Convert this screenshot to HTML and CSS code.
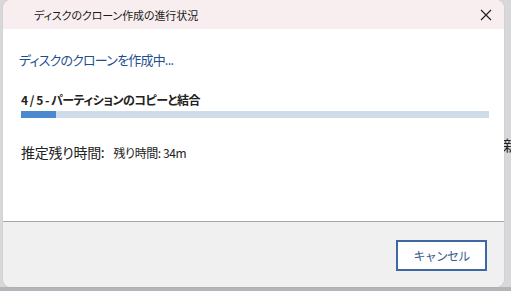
FILE: index.html
```html
<!DOCTYPE html>
<html lang="ja">
<head>
  <meta charset="UTF-8" />
  <title>ディスクのクローン作成の進行状況</title>
  <link rel="stylesheet" href="styles.css">
</head>
<body>
  <div class="desktop">
    <span class="behind-text">新</span>

    <div class="dialog">
      <div class="titlebar">
        <span class="title">ディスクのクローン作成の進行状況</span>
        <span class="close">
          <svg width="12" height="12" viewBox="0 0 12 12">
            <path d="M1 1 L11 11 M11 1 L1 11" stroke="#222" stroke-width="1.2" fill="none" />
          </svg>
        </span>
      </div>

      <div class="body">
        <div class="heading">ディスクのクローンを作成中...</div>
        <div class="step">4 / 5 - パーティションのコピーと結合</div>
        <div class="progress"><div class="progress-fill" style="width: 7.5%"></div></div>
        <div class="eta">
          <span class="eta-label">推定残り時間:</span>
          <span class="eta-value">残り時間: 34m</span>
        </div>
      </div>

      <div class="footer">
        <button class="btn-cancel">キャンセル</button>
      </div>
    </div>
  </div>
</body>
</html>
```

FILE: styles.css
```css
body {
  margin: 0;
  font-family: "Noto Sans CJK JP", "Noto Sans", sans-serif;
  font-feature-settings: "palt";
  background: #d4d4d6;
  overflow: hidden;
}

.desktop {
  position: relative;
  width: 511px;
  height: 291px;
  background: linear-gradient(to bottom, #d8d8da 0, #d8d8da 287px, #b4b5b8 287px);
}

.behind-text {
  position: absolute;
  left: 503px;
  top: 134px;
  font-size: 15px;
  color: #222;
}

/* window */
.dialog {
  position: absolute;
  left: 3px;
  top: 0;
  width: 501px;
  height: 287px;
  border-radius: 8px;
  overflow: hidden;
  background: #fff;
  display: flex;
  flex-direction: column;
  box-shadow: 0 0 1px rgba(0,0,0,0.3);
}

.titlebar {
  height: 29px;
  background: #f8eeef;
  display: flex;
  align-items: center;
  justify-content: space-between;
  padding: 0 10px 0 31px;
}

.title {
  font-size: 11px;
  letter-spacing: -0.1px;
  color: #1a1a1a;
}

.close {
  display: flex;
  margin-right: 2px;
}

.body {
  flex: 1;
  padding: 0 15px 0 18px;
  border-bottom: 1px solid #a4a6a8;
}

.heading {
  margin-top: 21px;
  font-size: 13px;
  letter-spacing: -0.8px;
  line-height: 20px;
  color: #1d4f8f;
  margin-left: -2px;
}

.step {
  margin-top: 22px;
  font-size: 12px;
  font-weight: bold;
  letter-spacing: -0.5px;
  line-height: 16px;
  color: #222;
}

.progress {
  margin-top: 3px;
  height: 7px;
  background: #cfdcea;
}

.progress-fill {
  height: 100%;
  background: #4a89d0;
}

.eta {
  margin-top: 24px;
  display: flex;
  align-items: baseline;
  gap: 9px;
  color: #222;
}

.eta-label {
  font-size: 14px;
  letter-spacing: -0.3px;
}

.eta-value {
  font-size: 12px;
  letter-spacing: -0.4px;
}

.footer {
  height: 65px;
  background: #f0f0f0;
  display: flex;
  justify-content: flex-end;
  align-items: flex-start;
  padding: 18px 17px 0 0;
  box-sizing: border-box;
}

.btn-cancel {
  width: 91px;
  height: 31px;
  background: #fff;
  border: 2px solid #3e68a3;
  font-family: inherit;
  font-size: 12px;
  letter-spacing: -0.8px;
  color: #3a5a8c;
  padding: 0;
}
```
